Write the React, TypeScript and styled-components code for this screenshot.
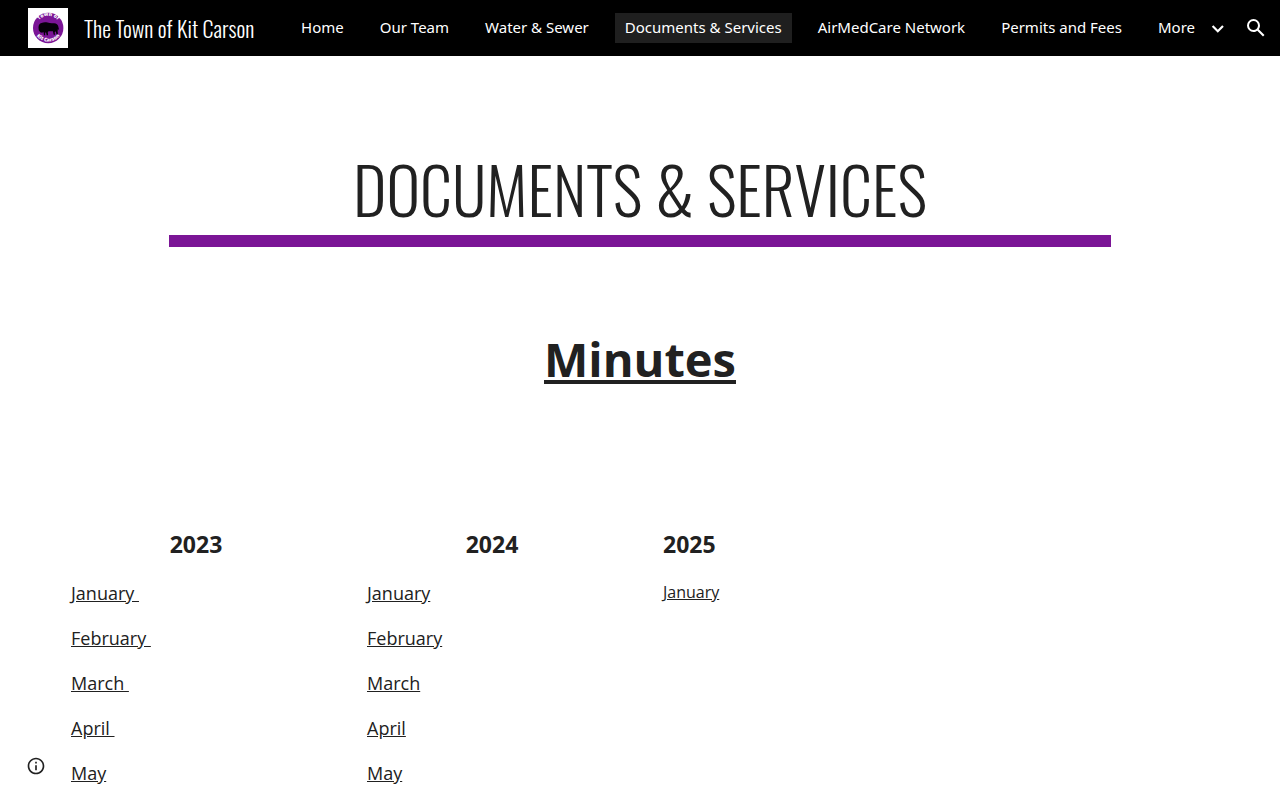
import React from "react";
import styled, { createGlobalStyle } from "styled-components";

const GlobalStyle = createGlobalStyle`
  *, *::before, *::after { box-sizing: border-box; }
  body {
    margin: 0;
    background: #fff;
    color: #212121;
    font-family: "Droid Sans", "Open Sans", "Noto Sans", sans-serif;
    font-size: 16px;
    overflow-x: hidden;
  }
`;

const condensed = `"Oswald", "Liberation Sans Narrow", "Arial Narrow", sans-serif`;

const Page = styled.div`
  height: 100vh;
  overflow: hidden;
`;

const Header = styled.header`
  display: flex;
  align-items: center;
  justify-content: space-between;
  height: 56px;
  padding: 0 12px 0 28px;
  background: #000;
  color: #fff;
`;

const Brand = styled.a`
  display: flex;
  align-items: center;
  gap: 16px;
  color: inherit;
  text-decoration: none;
  white-space: nowrap;
  font-family: ${condensed};
  font-size: 22px;
  font-weight: 300;
  line-height: 40px;
`;

const Nav = styled.nav`
  display: flex;
  align-items: center;
  gap: 16px;
  font-family: "Droid Sans", "Noto Sans", sans-serif;
  font-size: 15px;
`;

const NavLink = styled.a<{ $active?: boolean }>`
  padding: 0 10px 2px;
  background: ${(p) => (p.$active ? "#1f1f1f" : "transparent")};
  color: #fff;
  line-height: 28px;
  text-decoration: none;
  white-space: nowrap;
`;

const MoreButton = styled.button`
  display: flex;
  align-items: center;
  gap: 11px;
  padding: 0 0 2px 10px;
  border: 0;
  background: none;
  color: inherit;
  font: inherit;
  line-height: 28px;
`;

const IconButton = styled.button`
  display: flex;
  padding: 0;
  border: 0;
  background: none;
  color: inherit;
`;

const TitleSection = styled.section`
  padding: 88px 0 0;
`;

const Title = styled.h1`
  margin: 0 auto;
  padding-bottom: 2px;
  width: calc(100% - 338px);
  border-bottom: 12px solid #7b1596;
  font-family: ${condensed};
  font-size: 64px;
  font-weight: 300;
  line-height: 89px;
  text-align: center;
  text-transform: uppercase;
  white-space: nowrap;
`;

const Subtitle = styled.h2`
  margin: 80px 0 0;
  font-size: 47px;
  font-weight: 700;
  line-height: 64px;
  text-align: center;
  text-decoration: underline;
`;

const Columns = styled.section`
  display: grid;
  grid-template-columns: repeat(4, 1fr);
  margin: 135px 48px 0;
`;

const Column = styled.div`
  padding: 0 23px;
`;

const Year = styled.h3<{ $left?: boolean }>`
  margin: 0 0 17px;
  font-size: 23px;
  font-weight: 700;
  line-height: 36px;
  text-align: ${(p) => (p.$left ? "left" : "center")};
`;

const Months = styled.ul<{ $small?: boolean }>`
  display: grid;
  gap: 16px;
  margin: 0;
  padding: 0;
  list-style: none;
  font-size: ${(p) => (p.$small ? "16px" : "18px")};
  line-height: ${(p) => (p.$small ? "27px" : "29px")};
`;

const MonthLink = styled.a`
  color: inherit;
  text-decoration: underline;
  white-space: pre;
`;

const InfoButton = styled(IconButton)`
  position: fixed;
  left: 26px;
  bottom: 24px;
  color: #212121;
`;

const Logo = () => (
  <svg width="40" height="40" viewBox="0 0 40 40" aria-hidden="true">
    <rect width="40" height="40" fill="#fff" />
    <circle cx="20.2" cy="20" r="15.2" fill="#7b1596" />
    <path
      d="M10.500 19.500C10.500 17 11.500 15.500 13.500 15c2-.9 4-1.200 6-.4 2 .8 4.500.7 6.500.6 2.500 0 4 1.300 4.300 3.400l.9 3.900-1.300-1.800-.3 2.800.4 3h-1.400l-.9-3.200-1 .9.300 2.500h-1.300l-.8-3.400-4.400-.1-.7 1 .3 3h-1.400l-.8-3.200-.9 1.400.2 1.800h-1.200l-.5-3.200-1.500.8-1.700-.5-1.500-2z"
      fill="#050008"
    />
    <defs>
      <path id="logo-top" d="M9 15.500A12 12 0 0 1 31.400 15.500" />
      <path id="logo-bottom" d="M6.500 24A14.600 14.600 0 0 0 33.900 24" />
    </defs>
    <g fill="#fff" fontFamily="Open Sans, sans-serif" fontWeight="800" fontSize="5" textAnchor="middle">
      <text>
        <textPath href="#logo-top" startOffset="50%">Town of</textPath>
      </text>
      <text>
        <textPath href="#logo-bottom" startOffset="50%">Kit Carson</textPath>
      </text>
    </g>
  </svg>
);

const ChevronIcon = () => (
  <svg width="22" height="22" viewBox="0 0 22 22" fill="none" stroke="currentColor" strokeWidth="2.200" aria-hidden="true">
    <path d="M6.600 10 11.800 15.200l5.200-5.200" />
  </svg>
);

const SearchIcon = () => (
  <svg width="24" height="24" viewBox="0 0 24 24" fill="currentColor" aria-hidden="true">
    <path d="M20.490 19l-5.730-5.730C15.530 12.200 16 10.910 16 9.500A6.500 6.500 0 1 0 9.500 16c1.410 0 2.700-.47 3.770-1.240L19 20.490 20.490 19zM5 9.500C5 7.010 7.010 5 9.500 5S14 7.010 14 9.500 11.990 14 9.500 14 5 11.990 5 9.500z" />
  </svg>
);

const InfoIcon = () => (
  <svg width="20" height="20" viewBox="0 0 24 24" fill="currentColor" aria-hidden="true">
    <path d="M11 17h2v-6h-2v6zm1-15C6.480 2 2 6.480 2 12s4.480 10 10 10 10-4.480 10-10S17.520 2 12 2zm0 18c-4.410 0-8-3.590-8-8s3.590-8 8-8 8 3.590 8 8-3.590 8-8 8zM11 9h2V7h-2v2z" />
  </svg>
);

const links = ["Home", "Our Team", "Water & Sewer", "Documents & Services", "AirMedCare Network", "Permits and Fees"];

const years = [
  { year: "2023", months: ["January\u00a0", "February\u00a0", "March\u00a0", "April\u00a0", "May"] },
  { year: "2024", months: ["January", "February", "March", "April", "May"] },
  { year: "2025", months: ["January"], compact: true },
];

export default function App() {
  return (
    <Page>
      <GlobalStyle />
      <Header>
        <Brand href="#">
          <Logo />
          The Town of Kit Carson
        </Brand>
        <Nav>
          {links.map((label) => (
            <NavLink key={label} href="#" $active={label === "Documents & Services"}>
              {label}
            </NavLink>
          ))}
          <MoreButton type="button">
            More
            <ChevronIcon />
          </MoreButton>
          <IconButton type="button" aria-label="Search">
            <SearchIcon />
          </IconButton>
        </Nav>
      </Header>
      <main>
        <TitleSection>
          <Title>Documents &amp; Services</Title>
          <Subtitle>Minutes</Subtitle>
        </TitleSection>
        <Columns>
          {years.map(({ year, months, compact }) => (
            <Column key={year}>
              <Year $left={compact}>{year}</Year>
              <Months $small={compact}>
                {months.map((month) => (
                  <li key={month}>
                    <MonthLink href="#">{month}</MonthLink>
                  </li>
                ))}
              </Months>
            </Column>
          ))}
        </Columns>
      </main>
      <InfoButton type="button" aria-label="Site information">
        <InfoIcon />
      </InfoButton>
    </Page>
  );
}
